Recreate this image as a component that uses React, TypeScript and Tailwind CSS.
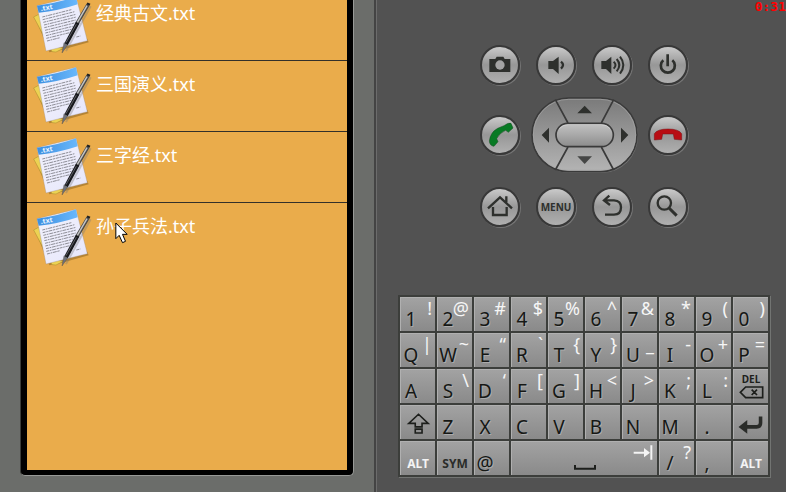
import type { ReactNode } from "react";

const files = ["经典古文.txt", "三国演义.txt", "三字经.txt", "孙子兵法.txt"];

type KeyDef = { main: string; alt?: string };

const keyRows: KeyDef[][] = [
  [
    { main: "1", alt: "!" }, { main: "2", alt: "@" }, { main: "3", alt: "#" }, { main: "4", alt: "$" }, { main: "5", alt: "%" },
    { main: "6", alt: "^" }, { main: "7", alt: "&" }, { main: "8", alt: "*" }, { main: "9", alt: "(" }, { main: "0", alt: ")" },
  ],
  [
    { main: "Q", alt: "|" }, { main: "W", alt: "~" }, { main: "E", alt: "“" }, { main: "R", alt: "`" }, { main: "T", alt: "{" },
    { main: "Y", alt: "}" }, { main: "U", alt: "_" }, { main: "I", alt: "-" }, { main: "O", alt: "+" }, { main: "P", alt: "=" },
  ],
  [
    { main: "A" }, { main: "S", alt: "\\" }, { main: "D", alt: "‘" }, { main: "F", alt: "[" }, { main: "G", alt: "]" },
    { main: "H", alt: "<" }, { main: "J", alt: ">" }, { main: "K", alt: ";" }, { main: "L", alt: ":" },
  ],
  [
    { main: "Z" }, { main: "X" }, { main: "C" }, { main: "V" },
    { main: "B" }, { main: "N" }, { main: "M" }, { main: "." },
  ],
];

function TextFileIcon() {
  return (
    <svg viewBox="0 3 192 210" className="h-[70px] w-16 shrink-0" aria-hidden="true">
      <defs>
        <linearGradient id="paper" x1="0" y1="0" x2="1" y2="1">
          <stop offset="0" stopColor="#f3f3fb" />
          <stop offset="1" stopColor="#e6e6fc" />
        </linearGradient>
        <linearGradient id="band" x1="0" y1="0" x2="1" y2="0">
          <stop offset="0" stopColor="#3c8fe0" />
          <stop offset="1" stopColor="#6ab8fc" />
        </linearGradient>
      </defs>
      <path d="M18 92 L58 190 L96 182 L176 160 L172 150 L60 100Z" fill="#8a6420" opacity="0.55" />
      <path d="M11 84 L26 76 L80 174 L100 178 L78 189 L66 188Z" fill="#ecd253" stroke="#a88a2c" strokeWidth="1.5" />
      <path d="M21 50 L138 22 L172 155 L48 186Z" fill="url(#paper)" stroke="#9a8a78" strokeWidth="1" />
      <path d="M21 50 Q82 43 138 22 L143 46 Q84 66 26 71Z" fill="url(#band)" />
      <text x="33" y="66" fontSize="21" fontWeight="bold" fill="#e8f4ff" transform="rotate(-10 33 66)">.txt</text>
      <g stroke="#8e8e97" strokeWidth="3" strokeDasharray="9 2 5 2 12 2 7 2" fill="none">
        <path d="M37 84 L124 62" />
        <path d="M38 92 L134 68" />
        <path d="M40 100 L138 76" />
        <path d="M42 108 L139 84" />
        <path d="M43 116 L137 93" />
        <path d="M45 124 L133 102" />
        <path d="M46 132 L128 112" />
        <path d="M48 140 L124 121" />
        <path d="M49 148 L119 131" />
        <path d="M51 156 L90 146" />
        <path d="M139 144 L151 141" />
      </g>
      <path d="M182 52 L108 186" stroke="#777" strokeWidth="6" opacity="0.35" />
      <path d="M173 49 L142 102" stroke="#4b4b4b" strokeWidth="11" strokeLinecap="round" />
      <path d="M171 50 L141 102" stroke="#c4c4c4" strokeWidth="4.5" />
      <path d="M143 101 L108 166" stroke="#18191d" strokeWidth="12" />
      <path d="M139 106 L108 161" stroke="#6b6c73" strokeWidth="2.5" />
      <path d="M102 161 L113 168 L96 192Z" fill="#70727a" stroke="#3f4044" />
      <path d="M171 43 L180 47" stroke="#222" strokeWidth="6" />
    </svg>
  );
}

function PadButton({ label, children }: { label: string; children: ReactNode }) {
  return (
    <button
      type="button"
      aria-label={label}
      className="flex size-10 items-center justify-center rounded-full border-2 border-[#383838] bg-linear-to-b from-[#cacaca] via-[#979797] to-[#b0b0b0] text-[#2e302d] shadow-[1px_1px_0_#747474]"
    >
      {children}
    </button>
  );
}

function PadIcon({ children }: { children: ReactNode }) {
  return (
    <svg viewBox="0 0 120 120" className="size-10 shrink-0" fill="none" stroke="currentColor" strokeWidth="7">
      {children}
    </svg>
  );
}

function DPad() {
  return (
    <button type="button" aria-label="Direction pad" className="h-[76px] w-[107px]">
      <svg viewBox="180 21 321 228" className="h-[76px] w-[107px]">
        <defs>
          <linearGradient id="pad" x1="0" y1="0" x2="0" y2="1">
            <stop offset="0" stopColor="#7a7a7a" />
            <stop offset="1" stopColor="#b4b4b4" />
          </linearGradient>
          <linearGradient id="center" x1="0" y1="0" x2="0" y2="1">
            <stop offset="0" stopColor="#c4c4c4" />
            <stop offset="1" stopColor="#8c8c8c" />
          </linearGradient>
        </defs>
        <rect x="186" y="27" width="315" height="222" rx="110" fill="#747474" />
        <rect x="183" y="24" width="315" height="221" rx="110" fill="url(#pad)" stroke="#3a3a3a" strokeWidth="5" />
        <rect x="187" y="28" width="307" height="213" rx="106" fill="none" stroke="#a6a6a6" strokeWidth="2" />
        <path d="M253 29 L291 99 M428 29 L391 99 M253 240 L291 171 M428 240 L391 171" stroke="#3a3a3a" strokeWidth="5" />
        <rect x="255" y="100" width="172" height="70" rx="35" fill="url(#center)" stroke="#3a3a3a" strokeWidth="5" />
        <path d="M265 116 Q275 104 291 104 H391 Q408 104 417 116" fill="none" stroke="#d8d8d8" strokeWidth="2" />
        <path d="M341 47 L363 70 H319Z M234 113 V158 L212 135Z M450 113 V158 L472 135Z" fill="#2e302d" />
        <path d="M319 199 H363 L341 222Z" fill="#454645" />
      </svg>
    </button>
  );
}

function Key({ label, wide, children }: { label: string; wide?: boolean; children: ReactNode }) {
  return (
    <button
      type="button"
      aria-label={label}
      className={`${wide ? "col-span-4" : ""} flex h-[34px] min-w-0 justify-between border-t border-l border-[#b0b0b0] bg-linear-to-b from-[#a2a2a2] to-[#8a8a8a]`}
    >
      {children}
    </button>
  );
}

function CharKey({ main, alt }: KeyDef) {
  return (
    <Key label={main}>
      <span className="mt-[9px] flex w-5 justify-center text-[19px] leading-[24px] text-[#161815] [text-shadow:1px_1px_0_#ababab]">
        {main}
      </span>
      {alt && <span className="-ml-4 pr-[3px] text-[18px] leading-[20px] text-[#f6f6f6]">{alt}</span>}
    </Key>
  );
}

function WordKey({ word, light }: { word: string; light?: boolean }) {
  return (
    <Key label={word}>
      <span
        className={`w-full pt-[15px] text-center text-[12px] leading-[14px] font-bold ${light ? "text-[#f4f4f4]" : "text-[#2a2c29]"}`}
      >
        {word}
      </span>
    </Key>
  );
}

function Keyboard() {
  return (
    <div className="grid w-full max-w-[372px] grid-cols-10 gap-0.5 border-2 border-[#3c3e3b] bg-[#3c3e3b] shadow-[1px_1px_0_#727472]">
      {keyRows[0].map((k) => <CharKey key={k.main} {...k} />)}
      {keyRows[1].map((k) => <CharKey key={k.main} {...k} />)}
      {keyRows[2].map((k) => <CharKey key={k.main} {...k} />)}
      <Key label="Delete">
        <span className="flex w-full flex-col items-center pt-[3px] text-[10px] leading-[13px] font-bold text-[#1d1f1c]">
          DEL
          <svg viewBox="0 0 75 39" className="h-[13px] w-[25px]" fill="none" stroke="currentColor" strokeWidth="5">
            <path d="M4 19 L20 3 H71 V35 H20Z M38 11 L54 27 M54 11 L38 27" />
          </svg>
        </span>
      </Key>

      <Key label="Shift">
        <svg viewBox="0 0 105 102" className="h-[34px] w-full" fill="none" stroke="#1d1f1c" strokeWidth="5">
          <path d="M54 24 L84 52 H65 V63 H44 V52 H24Z M44 70 H65 V82 H44Z" />
        </svg>
      </Key>
      {keyRows[3].map((k) => <CharKey key={k.main} {...k} />)}
      <Key label="Enter">
        <svg viewBox="0 0 105 102" className="h-[34px] w-full" fill="none" stroke="#2a2c29" strokeWidth="11">
          <path d="M40 63 H70 Q82 63 82 51 V31" />
          <path d="M14 63 L41 42 V84Z" fill="#2a2c29" stroke="none" />
        </svg>
      </Key>

      <WordKey word="ALT" light />
      <WordKey word="SYM" />
      <CharKey main="@" />
      <Key label="Space" wide>
        <span className="w-[25px]" />
        <svg viewBox="0 0 66 15" className="mt-[23px] h-[5px] w-[22px]" fill="none" stroke="#1d1f1c" strokeWidth="6">
          <path d="M3 0 V11 H63 V0" />
        </svg>
        <svg viewBox="0 0 60 45" className="mt-[3px] mr-1 h-[15px] w-5" fill="none" stroke="#f4f4f4" strokeWidth="6">
          <path d="M2 23 H46 M55 1 V44" />
          <path d="M33 9 L51 23 L33 37Z" fill="#f4f4f4" stroke="none" />
        </svg>
      </Key>
      <CharKey main="/" alt="?" />
      <CharKey main="," />
      <WordKey word="ALT" light />
    </div>
  );
}

export default function App() {
  return (
    <div className="relative flex min-h-screen w-full overflow-hidden bg-[#525252] font-['Noto_Sans','Noto_Sans_CJK_SC',sans-serif]">
      {/* Device screen */}
      <section className="flex w-[376px] shrink-0 flex-col border-r-2 border-[#444] bg-[#6b6d6a] px-5 pb-4">
        <div className="flex flex-1 flex-col rounded-b-[5px] border border-t-0 border-[#989a97] border-l-[#3c3e3b] bg-black px-1.5 pb-[5px]">
          <ul className="-mt-2.5 flex-1 bg-[#eaac4b]">
            {files.map((name) => (
              <li key={name} className="flex border-b border-[#33302a] pl-[3px] last:border-b-0">
                <TextFileIcon />
                <span className="pt-2.5 pl-0.5 text-[18px] leading-[26px] text-white">{name}</span>
              </li>
            ))}
          </ul>
        </div>
      </section>

      {/* Hardware controls */}
      <section className="flex min-w-0 flex-1 flex-col items-center border-l border-[#6c6c6c] pt-[45px] pl-[5px]">
        <div className="flex w-52 flex-col">
          <div className="flex justify-between">
            <PadButton label="Camera">
              <PadIcon>
                <path d="M28 42 H46 L50 35 H70 L74 42 H91 V81 H28Z" fill="currentColor" stroke="none" />
                <circle cx="60" cy="60" r="14" fill="#a4a4a4" stroke="none" />
              </PadIcon>
            </PadButton>
            <PadButton label="Volume down">
              <PadIcon>
                <path d="M37 48 H51 L68 35 V87 L51 72 H37Z" fill="currentColor" stroke="none" />
                <path d="M75 50 Q87 60 75 71" />
              </PadIcon>
            </PadButton>
            <PadButton label="Volume up">
              <PadIcon>
                <path d="M28 48 H42 L58 35 V87 L42 72 H28Z" fill="currentColor" stroke="none" />
                <path d="M65 50 Q76 60 65 71 M74 42 Q90 60 74 79 M84 35 Q104 60 84 86" strokeWidth="6" />
              </PadIcon>
            </PadButton>
            <PadButton label="Power">
              <PadIcon>
                <path d="M59 28 V64 M46 46 A21 21 0 1 0 73 46" strokeWidth="8" />
              </PadIcon>
            </PadButton>
          </div>

          <div className="mt-3 flex items-center justify-between">
            <PadButton label="Call">
              <PadIcon>
                <path
                  d="M72 32 Q85 22 93 25 L99 39 L85 52 L77 46 Q58 54 50 71 L54 80 L42 94 Q29 92 28 78 Q31 52 53 40Z"
                  fill="#087a24"
                  stroke="#144a20"
                  strokeWidth="1.5"
                />
              </PadIcon>
            </PadButton>
            <DPad />
            <PadButton label="Hang up">
              <PadIcon>
                <path
                  d="M19 75 V56 Q28 42 60 42 Q92 42 101 56 V75 L79 73 L76 57 H44 L41 73Z"
                  fill="#b80d13"
                  stroke="#761014"
                  strokeWidth="1.5"
                />
              </PadIcon>
            </PadButton>
          </div>

          <div className="mt-3.5 flex justify-between">
            <PadButton label="Home">
              <PadIcon>
                <path d="M24 64 L60 31 L96 64 M79 28 V46 M39 60 V84 H80 V60" />
              </PadIcon>
            </PadButton>
            <PadButton label="Menu">
              <span className="text-[10px] leading-none font-bold">MENU</span>
            </PadButton>
            <PadButton label="Back">
              <PadIcon>
                <path d="M52 26 L36 40 L54 54 M37 40 H66 Q87 41 87 61 Q87 83 66 83 H39" />
              </PadIcon>
            </PadButton>
            <PadButton label="Search">
              <PadIcon>
                <circle cx="49" cy="48" r="20" />
                <path d="M63 63 L86 86" strokeWidth="9" />
              </PadIcon>
            </PadButton>
          </div>
        </div>

        <div className="mt-[68px] flex w-full justify-center">
          <Keyboard />
        </div>
      </section>

      {/* Recording timer */}
      <time className="absolute top-0 right-0 font-['DejaVu_Sans_Mono',monospace] text-[13px] leading-[14px] font-bold text-[#ff0000]">
        0:31
      </time>

      {/* Mouse pointer */}
      <svg viewBox="0 0 38 66" className="absolute top-[222px] left-[115px] h-[22px] w-[13px]" aria-hidden="true">
        <path d="M2 3 V50 L12 40 L22 62 L31 58 L22 37 H36Z" fill="#fff" stroke="#000" strokeWidth="3" />
      </svg>
    </div>
  );
}
